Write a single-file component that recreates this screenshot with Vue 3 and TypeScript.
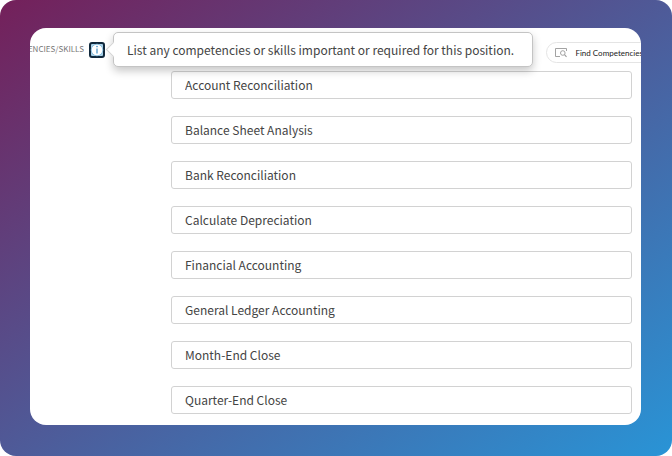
<script setup lang="ts">
import { ref } from 'vue'

const skills = ref<string[]>([
  'Account Reconciliation',
  'Balance Sheet Analysis',
  'Bank Reconciliation',
  'Calculate Depreciation',
  'Financial Accounting',
  'General Ledger Accounting',
  'Month-End Close',
  'Quarter-End Close',
])
</script>

<template>
  <main class="frame">
    <section class="panel">
      <header class="head">
        <div class="label"><span id="skills-label">COMPETENCIES/SKILLS</span></div>
        <div class="help">
          <button class="info" type="button" aria-describedby="skills-tip">
            <svg viewBox="0 0 16 16" width="16" height="16">
              <rect x="1" y="1" width="14" height="14" rx="2" fill="#a8d0e7" stroke="#10283c" stroke-width="2" />
              <circle cx="8" cy="8" r="5.8" fill="#fff" stroke="#7db6d8" stroke-width=".8" />
              <path d="M8 6.4V11.6" stroke="#3f8fc4" stroke-width="1.2" />
              <circle cx="8" cy="4.6" r=".8" fill="#3f8fc4" />
            </svg>
          </button>
          <div id="skills-tip" class="tip" role="tooltip">
            List any competencies or skills important or required for this position.
          </div>
        </div>
        <button class="find" type="button">
          <svg viewBox="0 0 12 11" width="12" height="11" fill="none" stroke="#999">
            <path d="M5 9.5H.5V1.5H11.5V4" stroke-width=".9" />
            <circle cx="7.8" cy="6" r="2.3" stroke-width=".9" />
            <path d="M9.5 7.7L11.5 9.8" stroke-width="1.1" />
          </svg>
          <span>Find Competencies/Skills</span>
        </button>
      </header>
      <ul class="list">
        <li v-for="(skill, i) in skills" :key="i">
          <input v-model="skills[i]" class="field" type="text" aria-labelledby="skills-label" />
        </li>
      </ul>
    </section>
  </main>
</template>

<style>
body {
  margin: 0;
  background: #fff;
}
</style>

<style scoped>
.frame {
  box-sizing: border-box;
  min-height: 100vh;
  padding: 28px 31px 31px 30px;
  border-radius: 16px;
  background: linear-gradient(to bottom right, #74205a, #2994d6);
  font-family: "Noto Sans CJK SC", "Noto Sans", sans-serif;
  color: #444;
}
.panel {
  overflow: hidden;
  padding-bottom: 11px;
  border-radius: 16px;
  background: #fff;
}
.head {
  display: flex;
  align-items: center;
  height: 43px;
}
.label {
  display: flex;
  justify-content: flex-end;
  flex: none;
  width: 54px;
  margin-right: 5px;
  padding-bottom: 2px;
  overflow: hidden;
  font-size: 8px;
  line-height: 16px;
  white-space: nowrap;
  color: #777;
}
.help {
  position: relative;
  flex: none;
  width: 16px;
  height: 16px;
}
.info {
  display: block;
  padding: 0;
  border: 0;
  background: none;
}
.info svg {
  display: block;
}
.tip {
  position: absolute;
  z-index: 1;
  top: -10px;
  left: 24px;
  padding: 6px 18px 6px 13px;
  border: 1px solid #c4c4c4;
  border-radius: 5px;
  background: #fff;
  box-shadow: 0 4px 9px rgba(0, 0, 0, 0.22);
  font-size: 12px;
  line-height: 21px;
  white-space: nowrap;
}
.tip::before {
  content: "";
  position: absolute;
  top: 11px;
  left: -6px;
  width: 10px;
  height: 10px;
  border: solid #d4d4d4;
  border-width: 0 0 1px 1px;
  background: #fff;
  transform: rotate(45deg);
}
.find {
  display: flex;
  align-items: center;
  flex: none;
  gap: 8px;
  box-sizing: border-box;
  height: 21px;
  margin: 6px -40px 0 auto;
  padding: 0 16px 0 8px;
  border: 1px solid #e4e4e4;
  border-radius: 11px;
  background: #fff;
  font-family: Lato, "Noto Sans", sans-serif;
  font-size: 8px;
  line-height: 16px;
  white-space: nowrap;
  color: #222;
}
.list {
  display: grid;
  gap: 17px;
  margin: 0;
  padding: 0 9px 0 141px;
  list-style: none;
}
.list li {
  display: flex;
}
.field {
  box-sizing: border-box;
  width: 100%;
  height: 28px;
  padding: 0 13px 1px;
  border: 1px solid #d2d2d2;
  border-radius: 3px;
  background: #fff;
  font: 12px "Noto Sans CJK SC", "Noto Sans", sans-serif;
  color: #444;
}
</style>
